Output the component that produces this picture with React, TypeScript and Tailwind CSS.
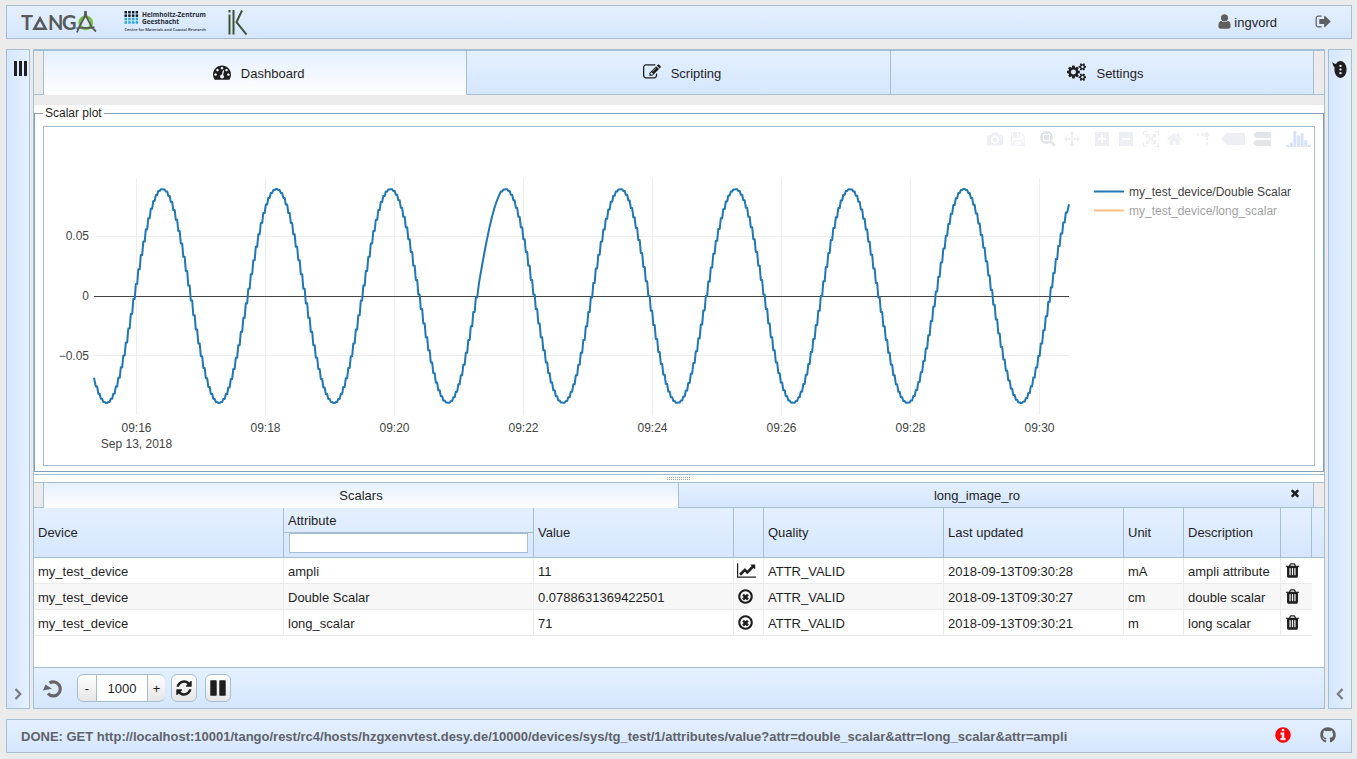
import { useId, useState } from "react";
import type { ReactNode } from "react";
import { FaGithub } from "react-icons/fa";

const GLYPHS = {
  user: "M1536 1399q0 109-62.5 187t-150.5 78h-854q-88 0-150.5-78t-62.5-187q0-85 8.5-160.5t31.5-152 58.5-131 94-89 134.5-34.5q131 128 313 128t313-128q76 0 134.5 34.5t94 89 58.5 131 31.5 152 8.5 160.5zm-256-887q0 159-112.5 271.5t-271.5 112.5-271.5-112.5-112.5-271.5 112.5-271.5 271.5-112.5 271.5 112.5 112.5 271.5z",
  signOut: "M704 1440q0 4 1 20t.5 26.5-3 23.5-10 19.5-20.5 6.5h-320q-119 0-203.5-84.5t-84.5-203.5v-704q0-119 84.5-203.5t203.5-84.5h320q13 0 22.5 9.5t9.5 22.5q0 4 1 20t.5 26.5-3 23.5-10 19.5-20.5 6.5h-320q-66 0-113 47t-47 113v704q0 66 47 113t113 47h312l11.5 1 11.5 3 8 5.5 7 9 2 13.5zm928-544q0 26-19 45l-544 544q-19 19-45 19t-45-19-19-45v-288h-448q-26 0-45-19t-19-45v-384q0-26 19-45t45-19h448v-288q0-26 19-45t45-19 45 19l544 544q19 19 19 45z",
  gauge: "M384 1152q0-53-37.5-90.5t-90.5-37.5-90.5 37.5-37.5 90.5 37.5 90.5 90.5 37.5 90.5-37.5 37.5-90.5zm192-448q0-53-37.5-90.5t-90.5-37.5-90.5 37.5-37.5 90.5 37.5 90.5 90.5 37.5 90.5-37.5 37.5-90.5zm428 481l101-382q6-26-7.5-48.5t-38.5-29.5-48 6.5-30 39.5l-101 382q-60 5-107 43.5t-63 98.5q-20 77 20 146t117 89 146-20 89-117q16-60-6-117t-72-91zm660-33q0-53-37.5-90.5t-90.5-37.5-90.5 37.5-37.5 90.5 37.5 90.5 90.5 37.5 90.5-37.5 37.5-90.5zm-640-640q0-53-37.5-90.5t-90.5-37.5-90.5 37.5-37.5 90.5 37.5 90.5 90.5 37.5 90.5-37.5 37.5-90.5zm448 192q0-53-37.5-90.5t-90.5-37.5-90.5 37.5-37.5 90.5 37.5 90.5 90.5 37.5 90.5-37.5 37.5-90.5zm320 448q0 261-141 483-19 29-54 29h-1402q-35 0-54-29-141-221-141-483 0-182 71-348t191-286 286-191 348-71 348 71 286 191 191 286 71 348z",
  edit: "M888 1184l116-116-152-152-116 116v56h96v96h56zm440-720q-16-16-33 1l-350 350q-17 17-1 33t33-1l350-350q17-17 1-33zm80 594v190q0 119-84.5 203.5t-203.5 84.5h-832q-119 0-203.5-84.5t-84.5-203.5v-832q0-119 84.5-203.5t203.5-84.5h832q63 0 117 25 15 7 18 23 3 17-9 29l-49 49q-14 14-32 8-23-6-45-6h-832q-66 0-113 47t-47 113v832q0 66 47 113t113 47h832q66 0 113-47t47-113v-126q0-13 9-22l64-64q15-15 35-7t20 29zm-96-738l288 288-672 672h-288v-288zm444 132l-92 92-288-288 92-92q28-28 68-28t68 28l152 152q28 28 28 68t-28 68z",
  cogs: "M896 896q0-106-75-181t-181-75-181 75-75 181 75 181 181 75 181-75 75-181zm768 512q0-52-38-90t-90-38-90 38-38 90q0 53 37.5 90.5t90.5 37.5 90.5-37.5 37.5-90.5zm0-1024q0-52-38-90t-90-38-90 38-38 90q0 53 37.5 90.5t90.5 37.5 90.5-37.5 37.5-90.5zm-384 421v185q0 10-7 19.5t-16 10.5l-155 24q-11 35-32 76 34 48 90 115 7 11 7 20 0 12-7 19-23 30-82.5 89.5t-78.5 59.5q-11 0-21-7l-115-90q-37 19-77 31-11 108-23 155-7 24-30 24h-186q-11 0-20-7.5t-10-17.5l-23-153q-34-10-75-31l-118 89q-7 7-20 7-11 0-21-8-144-133-144-160 0-9 7-19 10-14 41-53t47-61q-23-44-35-82l-152-24q-10-1-17-9.5t-7-19.5v-185q0-10 7-19.5t16-10.5l155-24q11-35 32-76-34-48-90-115-7-11-7-20 0-12 7-20 22-30 82-89t79-59q11 0 21 7l115 90q34-18 77-32 11-108 23-154 7-24 30-24h186q11 0 20 7.5t10 17.5l23 153q34 10 75 31l118-89q8-7 20-7 11 0 21 8 144 133 144 160 0 8-7 19-12 16-42 54t-45 60q23 48 34 82l152 23q10 2 17 10.5t7 19.5zm640 533v140q0 16-149 31-12 27-30 52 51 113 51 138 0 4-4 7-122 71-124 71-8 0-46-47t-52-68q-20 2-30 2t-30-2q-14 21-52 68t-46 47q-2 0-124-71-4-3-4-7 0-25 51-138-18-25-30-52-149-15-149-31v-140q0-16 149-31 13-29 30-52-51-113-51-138 0-4 4-7 4-2 35-20t59-34 30-16q8 0 46 46.5t52 67.5q20-2 30-2t30 2q51-71 92-112l6-2q4 0 124 70 4 3 4 7 0 25-51 138 17 23 30 52 149 15 149 31zm0-1024v140q0 16-149 31-12 27-30 52 51 113 51 138 0 4-4 7-122 71-124 71-8 0-46-47t-52-68q-20 2-30 2t-30-2q-14 21-52 68t-46 47q-2 0-124-71-4-3-4-7 0-25 51-138-18-25-30-52-149-15-149-31v-140q0-16 149-31 13-29 30-52-51-113-51-138 0-4 4-7 4-2 35-20t59-34 30-16q8 0 46 46.5t52 67.5q20-2 30-2t30 2q51-71 92-112l6-2q4 0 124 70 4 3 4 7 0 25-51 138 17 23 30 52 149 15 149 31z",
  comment: "M640 896q0-53-37.5-90.5t-90.5-37.5-90.5 37.5-37.5 90.5 37.5 90.5 90.5 37.5 90.5-37.5 37.5-90.5zm384 0q0-53-37.5-90.5t-90.5-37.5-90.5 37.5-37.5 90.5 37.5 90.5 90.5 37.5 90.5-37.5 37.5-90.5zm384 0q0-53-37.5-90.5t-90.5-37.5-90.5 37.5-37.5 90.5 37.5 90.5 90.5 37.5 90.5-37.5 37.5-90.5zm384 0q0 174-120 321.5t-326 233-450 85.5q-110 0-211-18-173 173-435 229-52 10-86 13-12 1-22-6t-13-18q-4-15 20-37 5-5 23.5-21.5t25.5-23.5 23.5-25.5 24-31.5 20.5-37 20-48 14.5-57.5 12.5-72.5q-146-90-229.5-216.5t-83.5-269.5q0-174 120-321.5t326-233 450-85.5 450 85.5 326 233 120 321.5z",
  refresh: "M1639 1056q0 5-1 7-64 268-268 434.5t-478 166.5q-146 0-282.5-55t-243.5-157l-129 129q-19 19-45 19t-45-19-19-45v-448q0-26 19-45t45-19h448q26 0 45 19t19 45-19 45l-137 137q71 66 161 102t187 36q134 0 250-65t186-179q11-17 53-117 8-23 30-23h192q13 0 22.5 9.5t9.5 22.5zm25-800v448q0 26-19 45t-45 19h-448q-26 0-45-19t-19-45 19-45l138-138q-148-137-349-137-134 0-250 65t-186 179q-11 17-53 117-8 23-30 23h-199q-13 0-22.5-9.5t-9.5-22.5v-7q65-268 270-434.5t480-166.5q146 0 284 55.5t245 156.5l130-129q19-19 45-19t45 19 19 45z",
  pause: "M1664 192v1408q0 26-19 45t-45 19h-512q-26 0-45-19t-19-45v-1408q0-26 19-45t45-19h512q26 0 45 19t19 45zm-896 0v1408q0 26-19 45t-45 19h-512q-26 0-45-19t-19-45v-1408q0-26 19-45t45-19h512q26 0 45 19t19 45z",
  trash: "M704 1376v-704q0-14-9-23t-23-9h-64q-14 0-23 9t-9 23v704q0 14 9 23t23 9h64q14 0 23-9t9-23zm256 0v-704q0-14-9-23t-23-9h-64q-14 0-23 9t-9 23v704q0 14 9 23t23 9h64q14 0 23-9t9-23zm256 0v-704q0-14-9-23t-23-9h-64q-14 0-23 9t-9 23v704q0 14 9 23t23 9h64q14 0 23-9t9-23zm-544-992h448l-48-117q-7-9-17-11h-317q-10 2-17 11zm928 32v64q0 14-9 23t-23 9h-96v948q0 83-47 143.5t-113 60.5h-832q-66 0-113-58.5t-47-141.5v-952h-96q-14 0-23-9t-9-23v-64q0-14 9-23t23-9h309l70-167q15-37 54-63t79-26h320q40 0 79 26t54 63l70 167h309q14 0 23 9t9 23z",
  lineChart: "M2048 1536v128h-2048v-1536h128v1408h1920zm-128-1248v435q0 21-19.5 29.5t-35.5-7.5l-121-121-633 633q-10 10-23 10t-23-10l-233-233-416 416-192-192 585-585q10-10 23-10t23 10l233 233 464-464-121-121q-16-16-7.5-35.5t29.5-19.5h435q14 0 23 9t9 23z",
  timesCircle: "M1225 1138l-146 146q-10 10-23 10t-23-10l-137-137-137 137q-10 10-23 10t-23-10l-146-146q-10-10-10-23t10-23l137-137-137-137q-10-10-10-23t10-23l146-146q10-10 23-10t23 10l137 137 137-137q10-10 23-10t23 10l146 146q10 10 10 23t-10 23l-137 137 137 137q10 10 10 23t-10 23zm215-242q0-148-73-273t-198-198-273-73-273 73-198 198-73 273 73 273 198 198 273 73 273-73 198-198 73-273zm224 0q0 209-103 385.5t-279.5 279.5-385.5 103-385.5-103-279.5-279.5-103-385.5 103-385.5 279.5-279.5 385.5-103 385.5 103 279.5 279.5 103 385.5z",
  infoCircle: "M1152 1376v-160q0-14-9-23t-23-9h-96v-512q0-14-9-23t-23-9h-320q-14 0-23 9t-9 23v160q0 14 9 23t23 9h96v320h-96q-14 0-23 9t-9 23v160q0 14 9 23t23 9h448q14 0 23-9t9-23zm-128-896v-160q0-14-9-23t-23-9h-192q-14 0-23 9t-9 23v160q0 14 9 23t23 9h192q14 0 23-9t9-23zm640 416q0 209-103 385.5t-279.5 279.5-385.5 103-385.5-103-279.5-279.5-103-385.5 103-385.5 279.5-279.5 385.5-103 385.5 103 279.5 279.5 103 385.5z",
  times: "M1490 1322q0 40-28 68l-136 136q-28 28-68 28t-68-28l-294-294-294 294q-28 28-68 28t-68-28l-136-136q-28-28-28-68t28-68l294-294-294-294q-28-28-28-68t28-68l136-136q28-28 68-28t68 28l294 294 294-294q28-28 68-28t68 28l136 136q28 28 28 68t-28 68l-294 294 294 294q28 28 28 68z",
};

function Glyph({ name, size, box = 1792, className = "" }: { name: keyof typeof GLYPHS; size: number; box?: number; className?: string }) {
  return (
    <svg viewBox={`0 0 ${box} 1792`} width={(size * box) / 1792} height={size} fill="currentColor" aria-hidden="true" className={`shrink-0 ${className}`}>
      <path d={GLYPHS[name]} />
    </svg>
  );
}

type ModeIcon = { label: string; width: number; d: string; active?: boolean; scale?: number };

const MODE_GROUPS: ModeIcon[][] = [
  [
    { label: "Download plot as a png", width: 1000, d: "m500 450c-83 0-150-67-150-150 0-83 67-150 150-150 83 0 150 67 150 150 0 83-67 150-150 150z m400 150h-120c-16 0-34 13-39 29l-31 93c-6 15-23 28-40 28h-340c-16 0-34-13-39-28l-31-94c-6-15-23-28-40-28h-120c-55 0-100-45-100-100v-450c0-55 45-100 100-100h800c55 0 100 45 100 100v450c0 55-45 100-100 100z m-400-550c-138 0-250 112-250 250 0 138 112 250 250 250 138 0 250-112 250-250 0-138-112-250-250-250z m365 380c-19 0-35 16-35 35 0 19 16 35 35 35 19 0 35-16 35-35 0-19-16-35-35-35z" },
    { label: "Save and edit plot in cloud", width: 857, d: "m214-7h429v214h-429v-214z m500 0h72v500q0 8-6 21t-11 20l-157 156q-5 6-19 12t-22 5v-232q0-22-15-38t-38-16h-322q-22 0-37 16t-16 38v232h-72v-714h72v232q0 22 16 38t37 16h465q22 0 38-16t15-38v-232z m-214 518v178q0 8-5 13t-13 5h-107q-7 0-13-5t-5-13v-178q0-8 5-13t13-5h107q7 0 13 5t5 13z m357-18v-518q0-22-15-38t-38-16h-750q-23 0-38 16t-16 38v750q0 22 16 38t38 16h517q23 0 50-12t42-26l156-157q16-15 27-42t11-49z" },
  ],
  [
    { label: "Zoom", width: 1000, active: true, d: "m1000-25l-250 251c40 63 63 138 63 218 0 224-182 406-407 406-224 0-406-182-406-406s183-406 407-406c80 0 155 22 218 62l250-250 125 125z m-812 250l0 438 437 0 0-438-437 0z m62 375l313 0 0-312-313 0 0 312z" },
    { label: "Pan", width: 1000, d: "m1000 350l-187 188 0-125-250 0 0 250 125 0-188 187-187-187 125 0 0-250-250 0 0 125-188-188 186-187 0 125 252 0 0-250-125 0 187-188 188 188-125 0 0 250 250 0 0-126 187 188z" },
  ],
  [
    { label: "Zoom in", width: 1000, d: "m1 787l0-875 875 0 0 875-875 0z m687-500l-187 0 0-187-125 0 0 187-188 0 0 125 188 0 0 187 125 0 0-187 187 0 0-125z" },
    { label: "Zoom out", width: 1000, d: "m0 788l0-876 875 0 0 876-875 0z m688-500l-500 0 0 125 500 0 0-125z" },
    { label: "Autoscale", width: 1000, d: "m250 850l-187 0-63 0 0-62 0-188 63 0 0 188 187 0 0 62z m688 0l-188 0 0-62 188 0 0-188 62 0 0 188 0 62-62 0z m-875-938l0 188-63 0 0-188 0-62 63 0 187 0 0 62-187 0z m875 188l0-188-188 0 0-62 188 0 62 0 0 62 0 188-62 0z m-125 188l-1 0-93-94-156 156 156 156 92-93 2 0 0 250-250 0 0-2 93-92-156-156-156 156 94 92 0 2-250 0 0-250 0 0 93 93 157-156-157-156-93 94 0 0 0-250 250 0 0 0-94 93 156 157 156-157-93-93 0 0 250 0 0 250z" },
    { label: "Reset axes", width: 929, d: "m786 296v-267q0-15-11-26t-25-10h-214v214h-143v-214h-214q-15 0-25 10t-11 26v267q0 1 0 2t0 2l321 264 321-264q1-1 1-4z m124 39l-34-41q-5-5-12-6h-2q-7 0-12 3l-386 322-386-322q-7-4-13-4-7 2-12 7l-35 41q-4 5-3 13t6 12l401 334q18 15 42 15t43-15l136-114v109q0 8 5 13t13 5h107q8 0 13-5t5-13v-227l122-102q5-5 6-12t-4-13z" },
  ],
  [
    { label: "Toggle spike lines", width: 1000, scale: 1.5, d: "M512 409c0-57-46-104-103-104-57 0-104 47-104 104 0 57 47 103 104 103 57 0 103-46 103-103z m-327-39l92 0 0 92-92 0z m-185 0l92 0 0 92-92 0z m370-186l92 0 0 93-92 0z m0-184l92 0 0 92-92 0z" },
    { label: "Show closest data on hover", width: 1500, d: "m375 725l0 0-375-375 375-374 0-1 1125 0 0 750-1125 0z" },
    { label: "Compare data on hover", width: 1125, active: true, d: "m187 786l0 2-187-188 188-187 0 0 937 0 0 373-938 0z m0-499l0 1-187-188 188-188 0 0 937 0 0 376-938-1z" },
  ],
];

const LOGO_BARS = "m0-10h182v-140h-182v140z m228 146h183v-286h-183v286z m225 714h182v-1000h-182v1000z m225-285h182v-715h-182v715z m225 142h183v-857h-183v857z m231-428h182v-429h-182v429z m225-291h183v-138h-183v138z";

function ModeBar() {
  return (
    <div className="absolute top-1 right-[3px] flex gap-[7px]">
      {MODE_GROUPS.map((group, g) => (
        <div key={g} className="flex gap-2 pr-2">
          {group.map((icon) => (
            <button key={icon.label} type="button" aria-label={icon.label} className={icon.active ? "text-[#e2e5ea]" : "text-[#eeeff4]"}>
              <svg viewBox={`0 0 ${icon.width} 1000`} width={(icon.width * 16) / 1000} height={16} fill="currentColor" aria-hidden="true">
                <path d={icon.d} transform={`matrix(${icon.scale ?? 1} 0 0 ${-(icon.scale ?? 1)} 0 850)`} />
              </svg>
            </button>
          ))}
        </div>
      ))}
      <button type="button" aria-label="Produced with Plotly" className="text-[#d6e2f7]">
        <svg viewBox="0 0 1542 1000" width={25} height={16} fill="currentColor" aria-hidden="true">
          <path d={LOGO_BARS} transform="matrix(1 0 0 -1 0 850)" />
        </svg>
      </button>
    </div>
  );
}

// Turning points of the signal, alternating trough / peak, in plot units.
const TURNS = [62.5, 118.5, 175, 232.5, 290, 346.5, 404, 461.5, 519, 576.5, 633.5, 691.5, 749, 806, 863.5, 920, 977, 1035];

function signal(x: number) {
  let from = 0;
  while (from < TURNS.length - 2 && x > TURNS[from + 1]) from += 1;
  const t = (x - TURNS[from]) / (TURNS[from + 1] - TURNS[from]);
  const sign = from % 2 === 0 ? 1 : -1;
  return 169 + sign * 107 * Math.cos(Math.PI * t);
}

function signalPath() {
  const step = 2.5;
  let d = `M50 ${signal(50).toFixed(1)}`;
  for (let x = 50 + step; x < 1025; x += step) {
    const smooth = x > 434 && x < 456;
    const y = signal(x).toFixed(1);
    d += smooth ? `L${x} ${y}` : `L${x - 0.7} ${y}L${x + 0.7} ${y}`;
  }
  return `${d}L1025 ${signal(1025).toFixed(1)}`;
}

const TIMES = ["09:16", "09:18", "09:20", "09:22", "09:24", "09:26", "09:28", "09:30"];

function Chart() {
  return (
    <svg viewBox="0 0 1270 338" className="block h-full w-full font-['Liberation_Sans',Arial,sans-serif] text-[12px]" role="img" aria-label="Scalar plot">
      <g stroke="#eeeeee">
        {TIMES.map((t, i) => (
          <line key={t} x1={92.5 + i * 129} x2={92.5 + i * 129} y1={51} y2={288} />
        ))}
        <line x1={50} x2={1025} y1={109.5} y2={109.5} />
        <line x1={50} x2={1025} y1={228.5} y2={228.5} />
      </g>
      <line x1={50} x2={1025} y1={169.5} y2={169.5} stroke="#444444" />
      <path d={signalPath()} fill="none" stroke="#1f77b4" strokeWidth={2} strokeLinejoin="round" />
      <g fill="#444444">
        {TIMES.map((t, i) => (
          <text key={t} x={92.5 + i * 129} y={305} textAnchor="middle">{t}</text>
        ))}
        <text x={92.5} y={321} textAnchor="middle">Sep 13, 2018</text>
        <text x={45} y={113} textAnchor="end">0.05</text>
        <text x={45} y={173} textAnchor="end">0</text>
        <text x={45} y={233} textAnchor="end">−0.05</text>
        <text x={1085} y={69}>my_test_device/Double Scalar</text>
        <text x={1085} y={88} opacity={0.5}>my_test_device/long_scalar</text>
      </g>
      <line x1={1050} x2={1080} y1={64.5} y2={64.5} stroke="#1f77b4" strokeWidth={2} />
      <line x1={1050} x2={1080} y1={83.5} y2={83.5} stroke="#ff7f0e" strokeWidth={2} opacity={0.5} />
    </svg>
  );
}

function TangoLogo() {
  return (
    <svg width={78} height={26} viewBox="0 0 78 26" role="img" aria-label="Tango">
      <g fill="#585a5a" className="font-['Lato',sans-serif] text-[20px] font-bold">
        <text x={0} y={21}>T</text>
        <text x={27} y={21}>N</text>
        <text x={41} y={21}>G</text>
      </g>
      <g fill="none" stroke="#585a5a">
        <path d="M13.500 19.700 19 9.500 24.500 19.700Z" strokeWidth={2.6} />
        <circle cx={64.7} cy={13.8} r={6} stroke="#79c043" strokeWidth={2.8} />
        <path d="M64.500 2 63.500 8 58 18.500 56 23.500M64.500 2 65.500 8 71 18.500 75 22.500M55.500 19.500 59 18.800H70.500L73.500 18" strokeWidth={1.8} />
        <circle cx={64.5} cy={3.2} r={1.3} fill="#585a5a" stroke="none" />
      </g>
    </svg>
  );
}

function HzgLogo() {
  return (
    <svg width={84} height={22} viewBox="0 0 168 44" role="img" aria-label="Helmholtz-Zentrum Geesthacht">
      {[0, 1, 2, 3].map((r) =>
        [0, 1, 2, 3].map((c) => <rect key={`${r}${c}`} x={1 + c * 7.4} y={r * 6.8} width={5} height={5} fill={r < 2 ? "#111827" : "#25a5e0"} />),
      )}
      <g fill="#1f2933" className="font-['Open_Sans',sans-serif]">
        <text x={36} y={11} className="text-[13px] font-bold">Helmholtz-Zentrum</text>
        <text x={36} y={25} className="text-[13px] font-bold">Geesthacht</text>
        <text x={1} y={40} className="text-[8px] font-semibold">Centre for Materials and Coastal Research</text>
      </g>
    </svg>
  );
}

function IkLogo() {
  return (
    <svg width={20} height={25} viewBox="0 0 20 25" role="img" aria-label="iK" stroke="#3e5432" strokeWidth={2} fill="none">
      <path d="M1.500 4.500v20M1.500 0v2.500M5.500 0v24.500M14 .5 8.500 12 18.500 24.500" />
    </svg>
  );
}

const BAR = "border border-[#a4bed4] bg-linear-to-b from-[#e4f0ff] to-[#d5e6fe]";
const TAB = "border-t border-r border-[#a4bed4]";
const TAB_ON = "bg-linear-to-b from-[#e4f0ff] to-white";
const TAB_OFF = "border-b bg-linear-to-b from-[#e4f0ff] to-[#d5e6fe]";

function TabEdge({ right = false }: { right?: boolean }) {
  return <div className={`w-[10px] shrink-0 border-t border-b border-[#a4bed4] bg-[#ebebeb] ${right ? "" : "border-r"}`} />;
}

function MainTab({ icon, label, selected = false }: { icon: ReactNode; label: string; selected?: boolean }) {
  return (
    <button type="button" role="tab" aria-selected={selected} className={`flex flex-1 items-center justify-center gap-[10px] pl-[7px] ${TAB} ${selected ? TAB_ON : TAB_OFF}`}>
      <span className="pb-[2px]">{icon}</span>
      <span className="pt-[2px]">{label}</span>
    </button>
  );
}

const ROWS = [
  { attr: "ampli", value: "11", plotted: false, time: "2018-09-13T09:30:28", unit: "mA", text: "ampli attribute" },
  { attr: "Double Scalar", value: "0.0788631369422501", plotted: true, time: "2018-09-13T09:30:27", unit: "cm", text: "double scalar" },
  { attr: "long_scalar", value: "71", plotted: true, time: "2018-09-13T09:30:21", unit: "m", text: "long scalar" },
];

function Head({ children }: { children?: ReactNode }) {
  return <th className="border-r border-b border-[#a4bed4] px-1 text-left font-normal">{children}</th>;
}

function Cell({ children, last = false }: { children: ReactNode; last?: boolean }) {
  return <td className={`border-b border-[#ebebeb] px-1 pt-[2px] leading-[23px] whitespace-nowrap ${last ? "" : "border-r"}`}>{children}</td>;
}

function IconCell({ children, last = false }: { children: ReactNode; last?: boolean }) {
  return <td className={`border-b border-[#ebebeb] px-[3px] ${last ? "" : "border-r"}`}>{children}</td>;
}

function ScalarTable() {
  const filterId = useId();
  const [filter, setFilter] = useState("");
  const rows = ROWS.filter((r) => r.attr.toLowerCase().includes(filter.toLowerCase()));
  return (
    <table className="w-full table-fixed border-separate border-spacing-0">
      <colgroup>
        <col className="w-[250px]" />
        <col className="w-[250px]" />
        <col className="w-[200px]" />
        <col className="w-[30px]" />
        <col className="w-[180px]" />
        <col className="w-[180px]" />
        <col className="w-[60px]" />
        <col className="w-[97px]" />
        <col className="w-[31px]" />
        <col />
      </colgroup>
      <thead>
        <tr className="h-[50px] bg-linear-to-b from-[#e4f0ff] to-[#d5e6fe]">
          <Head>Device</Head>
          <th className="border-r border-b border-[#a4bed4] p-0 text-left align-top font-normal">
            <label htmlFor={filterId} className="block h-[25px] border-b border-[#a4bed4] px-1 leading-[26px]">Attribute</label>
            <div className="px-[5px]">
              <input id={filterId} value={filter} onChange={(e) => setFilter(e.target.value)} className="block h-5 w-full border border-[#a4bed4] bg-white px-1" />
            </div>
          </th>
          <Head>Value</Head>
          <Head />
          <Head>Quality</Head>
          <Head>Last updated</Head>
          <Head>Unit</Head>
          <Head>Description</Head>
          <Head />
          <th className="border-b border-[#a4bed4]" />
        </tr>
      </thead>
      <tbody>
        {rows.map((r) => (
          <tr key={r.attr} className="h-[26px] bg-white even:bg-[#f7f7f7]">
            <Cell>my_test_device</Cell>
            <Cell>{r.attr}</Cell>
            <Cell>{r.value}</Cell>
            <IconCell>
              <button type="button" aria-label={r.plotted ? "Remove from plot" : "Add to plot"} className="block">
                {r.plotted ? <Glyph name="timesCircle" size={17} /> : <Glyph name="lineChart" size={17} box={2048} />}
              </button>
            </IconCell>
            <Cell>ATTR_VALID</Cell>
            <Cell>{r.time}</Cell>
            <Cell>{r.unit}</Cell>
            <Cell>{r.text}</Cell>
            <IconCell last>
              <button type="button" aria-label={`Delete ${r.attr}`} className="block">
                <Glyph name="trash" size={17} />
              </button>
            </IconCell>
            <td className="bg-white" />
          </tr>
        ))}
      </tbody>
    </table>
  );
}

function Toolbar() {
  const [period, setPeriod] = useState(1000);
  const face = "border border-[#a4bed4] bg-linear-to-b from-white to-[#e6e6e6]";
  return (
    <div className="flex h-[41px] shrink-0 items-center border-t border-[#a4bed4] bg-linear-to-b from-[#e4f0ff] to-[#d5e6fe] px-[9px]">
      <button type="button" aria-label="Reload" className="text-[#666666]">
        <svg width={20} height={20} viewBox="0 0 20 20" fill="none" aria-hidden="true">
          <path d="M6.500 5A7 7 0 1 1 5 15.500" stroke="currentColor" strokeWidth={3.2} />
          <path d="M0 12.500 2.500 6.500 9 10.800Z" fill="currentColor" />
        </svg>
      </button>
      <div className="ml-[14px] flex h-7">
        <button type="button" aria-label="Decrease" onClick={() => setPeriod(period - 100)} className={`w-5 rounded-l-md pt-[2px] ${face}`}>-</button>
        <input aria-label="Refresh period" value={period} onChange={(e) => setPeriod(Number(e.target.value) || 0)} className="w-[50px] border-y border-[#a4bed4] bg-white pt-[2px] text-center" />
        <button type="button" aria-label="Increase" onClick={() => setPeriod(period + 100)} className={`w-[18px] rounded-r-md border-r-0 pt-[2px] ${face}`}>+</button>
      </div>
      <button type="button" aria-label="Refresh" className={`ml-[6px] flex h-7 w-[26px] items-center justify-center rounded-md pr-px ${face}`}>
        <Glyph name="refresh" size={18} />
      </button>
      <button type="button" aria-label="Pause" className={`ml-2 flex h-7 w-[26px] items-center justify-center rounded-md pr-px ${face}`}>
        <Glyph name="pause" size={18} />
      </button>
    </div>
  );
}

function Chevron({ left = false }: { left?: boolean }) {
  return (
    <svg width={8} height={12} viewBox="0 0 8 12" fill="none" stroke="#7a7a7a" strokeWidth={2.2} aria-hidden="true">
      <path d={left ? "M6.500 1 1.800 6l4.700 5" : "M1.500 1l4.700 5-4.700 5"} />
    </svg>
  );
}

function SidePanel({ right = false, children }: { right?: boolean; children: ReactNode }) {
  return (
    <aside className="flex w-6 shrink-0 flex-col items-center justify-between border border-[#a4bed4] bg-linear-to-r from-[#d5e6fe] to-[#e4f0ff] pt-[11px] pb-2">
      {children}
      <button type="button" aria-label={right ? "Expand right panel" : "Expand left panel"}>
        <Chevron left={right} />
      </button>
    </aside>
  );
}

export default function App() {
  return (
    <div className="flex min-h-screen flex-col gap-[10px] bg-[#ebebeb] pt-[5px] pr-[5px] pb-[6px] pl-[6px] font-['Liberation_Sans',Arial,sans-serif] text-[13px] leading-5 text-[#1f1f1f]">
      <header className={`flex h-[34px] shrink-0 items-center ${BAR}`}>
        <div className="ml-[14px]"><TangoLogo /></div>
        <div className="ml-[25px]"><HzgLogo /></div>
        <div className="ml-5"><IkLogo /></div>
        <div className="ml-auto flex items-center gap-px">
          <Glyph name="user" size={17} className="mb-[2px] text-[#5f5f5f]" />
          <span className="pt-[2px]">ingvord</span>
        </div>
        <button type="button" aria-label="Sign out" className="mr-[19px] ml-[38px] pb-[2px] text-[#5f5f5f]">
          <Glyph name="signOut" size={17} />
        </button>
      </header>

      <div className="flex flex-1 gap-[3px]">
        <SidePanel>
          <button type="button" aria-label="Devices" className="flex h-[15px] gap-[2px] pl-1">
            <span className="w-[3px] bg-[#1f1f1f]" />
            <span className="w-[3px] bg-[#1f1f1f]" />
            <span className="w-[3px] bg-[#1f1f1f]" />
          </button>
        </SidePanel>

        <main className="flex min-w-0 flex-1 flex-col border border-[#a4bed4] bg-white">
          <div role="tablist" className="flex h-[45px] shrink-0">
            <TabEdge />
            <MainTab selected label="Dashboard" icon={<Glyph name="gauge" size={18} />} />
            <MainTab label="Scripting" icon={<Glyph name="edit" size={18} />} />
            <MainTab label="Settings" icon={<Glyph name="cogs" size={18} box={1920} />} />
            <TabEdge right />
          </div>
          <div className="h-[10px] shrink-0 bg-[#ebebeb]" />

          <fieldset className="flex min-w-0 flex-1 flex-col border border-[#7f9fbd] px-2 pt-[5px] pb-1">
            <legend className="px-[2px] text-[12px] leading-4">Scalar plot</legend>
            <div className="relative h-[340px] border border-[#a4bed4]">
              <Chart />
              <ModeBar />
            </div>
          </fieldset>

          <div className="mt-[2px] flex h-2 shrink-0 items-center justify-center border-t border-[#a4bed4]">
            <svg width={24} height={4} fill="#a0aab8" aria-hidden="true">
              {Array.from({ length: 12 }, (_, i) => (
                <g key={i}>
                  <rect x={i * 2} y={0} width={1} height={1} />
                  <rect x={i * 2} y={2} width={1} height={1} />
                </g>
              ))}
            </svg>
          </div>

          <div role="tablist" className="flex h-[26px] shrink-0">
            <TabEdge />
            <button type="button" role="tab" aria-selected="true" className={`flex-1 ${TAB} ${TAB_ON}`}>Scalars</button>
            <div className={`flex flex-1 items-center ${TAB} ${TAB_OFF}`}>
              <button type="button" role="tab" aria-selected="false" className="flex-1 pt-[2px] pr-[14px]">long_image_ro</button>
              <button type="button" aria-label="Close long_image_ro" className="w-6 pb-1">
                <Glyph name="times" size={12} />
              </button>
            </div>
            <TabEdge right />
          </div>

          <ScalarTable />
          <div className="h-[31px] shrink-0" />
          <Toolbar />
        </main>

        <SidePanel right>
          <button type="button" aria-label="Messages" className="rotate-90">
            <Glyph name="comment" size={17} />
          </button>
        </SidePanel>
      </div>

      <footer className={`flex h-[34px] shrink-0 items-center pl-[14px] ${BAR}`}>
        <p className="min-w-0 flex-1 truncate pt-[2px] font-bold text-[#5f6368]">
          DONE: GET http://localhost:10001/tango/rest/rc4/hosts/hzgxenvtest.desy.de/10000/devices/sys/tg_test/1/attributes/value?attr=double_scalar&amp;attr=long_scalar&amp;attr=ampli
        </p>
        <button type="button" aria-label="Information" className="pb-[2px] text-[#ff0000]">
          <Glyph name="infoCircle" size={18} />
        </button>
        <a href="#github" aria-label="GitHub" className="mr-[15px] ml-7 pb-[2px] text-[#5f5f5f]">
          <FaGithub size={16} />
        </a>
      </footer>
    </div>
  );
}
